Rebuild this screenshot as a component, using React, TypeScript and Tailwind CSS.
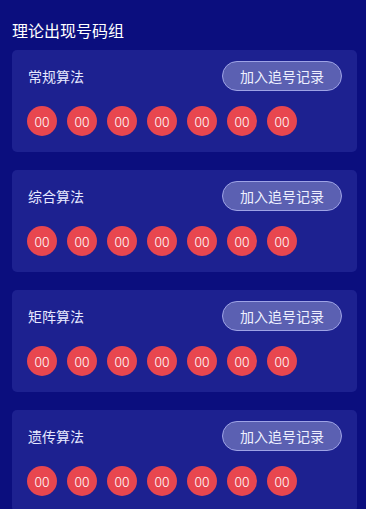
const algorithms = ['常规算法', '综合算法', '矩阵算法', '遗传算法']

export default function App() {
  return (
    <div
      className="min-h-[509px] bg-[#0b0e7e] pl-3 pr-[9px] pt-[19px] pb-4"
      style={{ fontFamily: '"Noto Sans CJK SC", "Noto Sans", sans-serif' }}
    >
      <h1 className="text-[16px] leading-[22px] text-white">理论出现号码组</h1>
      <div className="mt-[9px] flex flex-col gap-[18px]">
        {algorithms.map((name) => (
          <div key={name} className="rounded-[5px] bg-[#1d2190] px-[15px] pt-[11px] pb-[16px]">
            <div className="flex h-[30px] items-center justify-between">
              <span className="pl-[1px] text-[14px] text-[#e6e8ff]">{name}</span>
              <button className="h-[30px] w-[120px] rounded-full border border-[#9ea3e6] bg-[#5b60b2] text-[14px] text-[#eef0ff]">
                加入追号记录
              </button>
            </div>
            <div className="mt-[15px] flex gap-[10px]">
              {Array.from({ length: 7 }).map((_, i) => (
                <div
                  key={i}
                  className="flex h-[30px] w-[30px] items-center justify-center rounded-full bg-[#e8464f] text-[14px] font-light text-white"
                >
                  00
                </div>
              ))}
            </div>
          </div>
        ))}
      </div>
    </div>
  )
}
